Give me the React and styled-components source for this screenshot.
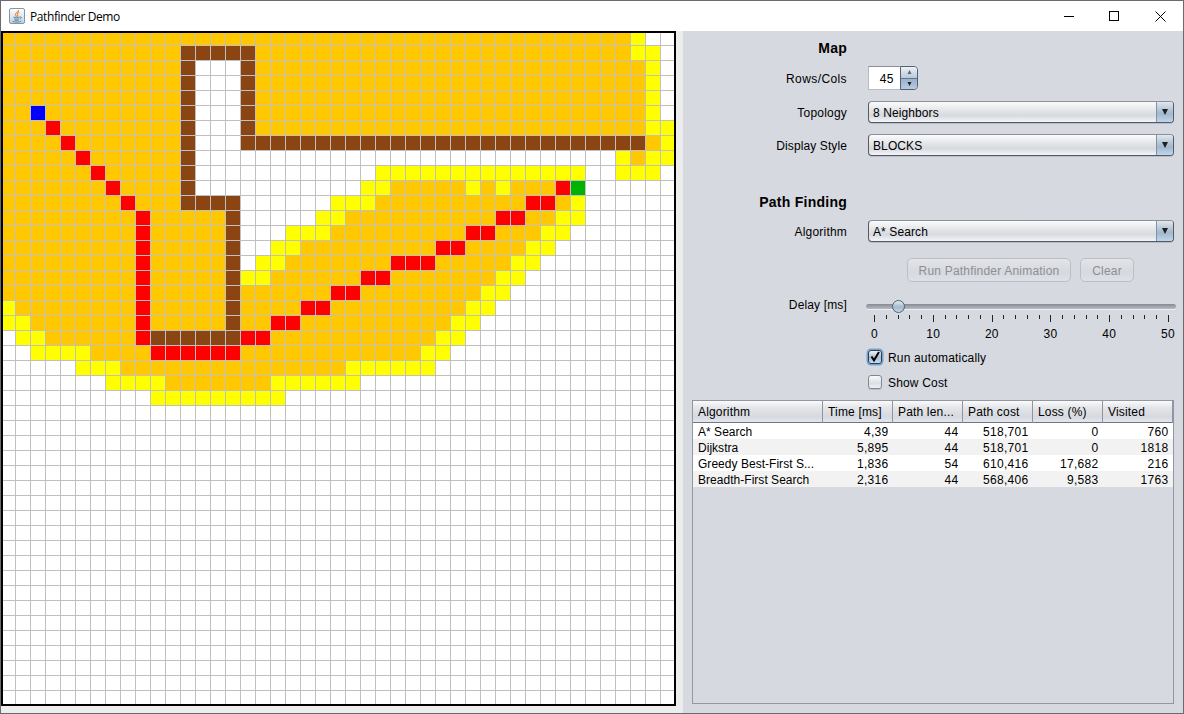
import React from "react";
import styled, { createGlobalStyle } from "styled-components";

const GlobalStyle = createGlobalStyle`
  * { box-sizing: border-box; }
  html, body { margin: 0; padding: 0; overflow: hidden; background: #6b6b6b; }
  body { font: 12px "Liberation Sans", Arial, sans-serif; color: #000; }
`;

const Window = styled.div`
  width: 1184px;
  height: 714px;
  border: 1px solid #6b6b6d;
  display: flex;
  flex-direction: column;
  background: #ededed;
`;

const TitleBar = styled.header`
  height: 30px;
  flex: none;
  background: #fff;
  display: flex;
  align-items: center;
  padding-left: 8px;
`;

const Title = styled.span`
  flex: 1;
  margin-left: 5px;
  font: 12px "Open Sans", "Noto Sans", sans-serif;
  letter-spacing: -0.4px;
`;

const WindowButton = styled.div`
  width: 46px;
  height: 30px;
  display: flex;
  align-items: center;
  justify-content: center;
`;

const Body = styled.div`
  flex: 1;
  display: flex;
  align-items: stretch;
`;

const Board = styled.div`
  position: relative;
  flex: none;
  width: 675px;
  height: 675px;
  display: grid;
  grid-template-columns: repeat(45, 15px);
  grid-auto-rows: 15px;
  background: #fff;
  &::after {
    content: "";
    position: absolute;
    inset: 0;
    border: 2px solid #000;
  }
`;

const Cell = styled.div`
  background: ${(p) => p.$color};
  border-right: 1px solid #c0c0c0;
  border-bottom: 1px solid #c0c0c0;
`;

const Panel = styled.aside`
  flex: 1;
  min-width: 0;
  margin-left: 7px;
  background: #d6d9df;
  display: flex;
  flex-direction: column;
  padding: 4px 6px 8px 9px;
`;

const Row = styled.div`
  display: grid;
  grid-template-columns: 155px 1fr;
  column-gap: 21px;
  align-items: center;
  height: ${(p) => p.$height}px;
  margin-top: ${(p) => p.$gap || 0}px;
`;

const Label = styled.span`
  text-align: right;
  white-space: nowrap;
  padding-top: ${(p) => p.$drop || 0}px;
  letter-spacing: ${(p) => p.$spacing ?? 0.15}px;
`;

const Heading = styled.h2`
  margin: 0;
  text-align: right;
  white-space: nowrap;
  font-size: 14px;
  font-weight: bold;
  letter-spacing: 0.25px;
`;

const Spinner = styled.div`
  display: flex;
  width: 50px;
  height: 24px;
`;

const SpinnerValue = styled.span`
  width: 32px;
  background: #fff;
  border: 1px solid #b9bcc2;
  border-top: 1px solid #8d9099;
  border-right: 0;
  line-height: 24px;
  text-align: right;
  padding-right: 6px;
  letter-spacing: 0.5px;
`;

const SpinnerButtons = styled.div`
  flex: 1;
  border: 1px solid #4f6377;
  border-radius: 0 4px 4px 0;
  display: flex;
  flex-direction: column;
  overflow: hidden;
`;

const SpinnerButton = styled.div`
  flex: 1;
  display: flex;
  align-items: center;
  justify-content: center;
  background: ${(p) =>
    p.$down ? "linear-gradient(#9db2c8, #b5cbe0)" : "linear-gradient(#eef2f6, #b9c8d7)"};
  border-bottom: ${(p) => (p.$down ? "0" : "1px solid #62778d")};
`;

const Combo = styled.div`
  width: 306px;
  height: 22px;
  display: flex;
  border: 1px solid #545964;
  border-top-color: #8d9099;
  border-radius: 4px;
  box-shadow: 0 1px 0 #b9bdc6;
  background: linear-gradient(#fbfbfc, #e4e6e9 40%, #d7dade 68%, #f3f5fa);
  overflow: hidden;
`;

const ComboText = styled.span`
  flex: 1;
  line-height: 22px;
  padding-left: 4px;
  letter-spacing: 0.1px;
`;

const ComboArrow = styled.span`
  width: 17px;
  display: flex;
  align-items: center;
  justify-content: center;
  border-left: 1px solid #7d93a8;
  background: linear-gradient(#e1e8ef, #afc1d2 45%, #a4b8cc 60%, #bfd6ec);
`;

const ButtonBar = styled.div`
  display: flex;
  gap: 9px;
  height: 24px;
  margin-top: 16px;
  padding-left: 215px;
`;

const PushButton = styled.button`
  width: ${(p) => p.$width}px;
  height: 24px;
  padding: 1px 0 0;
  border: 1px solid #bcbfc6;
  border-radius: 5px;
  background: linear-gradient(#e2e4e8, #d6d9de 60%, #dde0e6);
  color: #8e8f91;
  font: 12px "Liberation Sans", Arial, sans-serif;
  letter-spacing: 0.2px;
`;

const SliderRow = styled.div`
  display: flex;
  margin-top: 14px;
  height: 48px;
`;

const SliderLabel = styled(Label)`
  flex: none;
  width: 155px;
  line-height: 18px;
`;

const Slider = styled.div`
  flex: none;
  width: 312px;
  margin-left: 19px;
`;

const SliderLabels = styled.div`
  display: flex;
  justify-content: space-between;
  width: 323.5px;
  margin-left: -6.5px;
`;

const SliderValue = styled.span`
  width: 30px;
  text-align: center;
  line-height: 14px;
  letter-spacing: 0.3px;
`;

const CheckRow = styled.label`
  display: flex;
  align-items: center;
  height: 25px;
  padding-left: 176px;
  letter-spacing: 0.17px;
`;

const CheckText = styled.span`
  padding-top: 2px;
`;

const CheckBox = styled.span`
  width: 14px;
  height: 14px;
  margin-right: 6px;
  border: 1px solid ${(p) => (p.$checked ? "#2d3e50" : "#84878f")};
  border-radius: 3px;
  background: ${(p) =>
    p.$checked
      ? "linear-gradient(#edf2f7, #a9bdd0 55%, #c5dcf0)"
      : "linear-gradient(#fbfbfc, #dcdee2 60%, #f0f1f4)"};
  box-shadow: ${(p) => (p.$checked ? "0 0 0 1.5px #73a4d1" : "0 1px 0 #b9bdc6")};
`;

const TableFrame = styled.div`
  margin-top: 6px;
  width: 482px;
  height: 304px;
  border: 1px solid #9297a1;
`;

const TableRow = styled.div`
  display: grid;
  grid-template-columns: 130px repeat(5, 70px);
  height: 16px;
  line-height: 18px;
  background: ${(p) => (p.$shaded ? "#f2f2f2" : "#fff")};
`;

const TableHead = styled(TableRow)`
  height: 22px;
  line-height: 22px;
  background: linear-gradient(#fbfbfc, #e4e6e9 30%, #d6d9df 75%, #e3e6ec);
  border-bottom: 1px solid #70757f;
`;

const HeadCell = styled.span`
  padding-left: 5px;
  white-space: nowrap;
  border-right: 1px solid #8f949e;
  letter-spacing: 0.17px;
`;

const TableCell = styled.span`
  padding: 0 4.5px 0 5px;
  white-space: nowrap;
  text-align: ${(p) => (p.$numeric ? "right" : "left")};
  letter-spacing: ${(p) => (p.$numeric ? 0.3 : 0.03)}px;
`;

const COLORS = {
  W: "#ffffff",
  O: "#ffc800",
  Y: "#ffff00",
  B: "#8b4513",
  R: "#ff0000",
  S: "#0000ff",
  G: "#00b300",
};

/* Each row is run-length coded; whatever is left of a row stays free. */
const MAP = [
  "O42 Y1",
  "O12 B5 O25 Y2",
  "O12 B1 W3 B1 O26 Y1",
  "O12 B1 W3 B1 O26 Y1",
  "O12 B1 W3 B1 O26 Y1",
  "O2 S1 O9 B1 W3 B1 O26 Y1",
  "O3 R1 O8 B1 W3 B1 O26 Y2",
  "O4 R1 O7 B1 W3 B27 O1 Y1",
  "O5 R1 O6 B1 W28 Y1 O1 Y2",
  "O6 R1 O5 B1 W12 Y14 W2 Y3",
  "O7 R1 O4 B1 W11 Y2 O5 Y1 O1 Y1 O3 R1 G1",
  "O8 R1 O3 B4 W6 Y3 O10 R2 O1 Y1",
  "O9 R1 O5 B1 W5 Y2 O10 R2 O2 Y2",
  "O9 R1 O5 B1 W3 Y3 O9 R2 O3 Y2",
  "O9 R1 O5 B1 W2 Y2 O9 R2 O4 Y2",
  "O9 R1 O5 B1 W1 Y2 O7 R3 O5 Y2",
  "O9 R1 O5 B1 Y2 O6 R2 O7 Y2",
  "O9 R1 O5 B1 O6 R2 O8 Y2",
  "Y1 O8 R1 O5 B1 O4 R2 O9 Y2",
  "Y2 O7 R1 O5 B1 O2 R2 O10 Y2",
  "W1 Y2 O6 R1 B6 R2 O11 Y2",
  "W2 Y4 O4 R6 O12 Y2",
  "W5 Y3 O15 Y6",
  "W7 Y4 O7 Y6",
  "W10 Y9",
];

const cells = Array.from({ length: 45 }, (_, r) => {
  const line = (MAP[r] || "")
    .split(" ")
    .filter(Boolean)
    .map((run) => run[0].repeat(Number(run.slice(1))))
    .join("");
  return line.padEnd(45, "W").split("");
}).flat();

const HEADERS = ["Algorithm", "Time [ms]", "Path len...", "Path cost", "Loss (%)", "Visited"];
const RESULTS = [
  ["A* Search", "4,39", "44", "518,701", "0", "760"],
  ["Dijkstra", "5,895", "44", "518,701", "0", "1818"],
  ["Greedy Best-First S...", "1,836", "54", "610,416", "17,682", "216"],
  ["Breadth-First Search", "2,316", "44", "568,406", "9,583", "1763"],
];

const JavaIcon = () => (
  <svg width="16" height="16" viewBox="0 0 16 16" fill="none">
    <defs>
      <linearGradient id="jbg" x1="0" y1="0" x2="0" y2="1">
        <stop offset="0" stopColor="#ffffff" />
        <stop offset="1" stopColor="#c3d2de" />
      </linearGradient>
    </defs>
    <rect x="0.5" y="0.5" width="15" height="15" rx="1.5" fill="url(#jbg)" stroke="#7f97aa" />
    <path d="M9.6 2C10 4 6 4.8 6.4 6.6C6.6 7.5 7.4 7.8 7.5 8.6M10.4 4.5C8.5 5 8 6 8.6 6.8C9 7.4 8.8 8 8.2 8.6" stroke="#ed8b3c" strokeWidth="1.1" />
    <path d="M4.5 9.3H10.8M5 11H10.2M5.6 12.3H9.6M10.9 8.9C13 8.5 12.9 10.5 10.9 11M3.4 13.4C5.5 14.4 10.5 14.4 12.4 13.1" stroke="#54809f" strokeWidth="0.9" />
  </svg>
);

const Triangle = ({ w = 8, h = 7, up, color = "#1c1f24" }) => (
  <svg width={w} height={h} viewBox="0 0 8 7">
    <path d={up ? "M0.5 7L4 0L7.5 7Z" : "M0.5 0H7.5L4 7Z"} fill={color} />
  </svg>
);

const Select = ({ text }) => (
  <Combo>
    <ComboText>{text}</ComboText>
    <ComboArrow>
      <Triangle h={6} />
    </ComboArrow>
  </Combo>
);

const SliderTrack = () => (
  <svg width="312" height="31" viewBox="866 296 312 31" style={{ display: "block" }}>
    <defs>
      <linearGradient id="track" x1="0" y1="0" x2="0" y2="1">
        <stop offset="0" stopColor="#858a95" />
        <stop offset="1" stopColor="#b7bbc4" />
      </linearGradient>
      <linearGradient id="thumb" x1="0" y1="0" x2="0" y2="1">
        <stop offset="0" stopColor="#e9eff5" />
        <stop offset="0.55" stopColor="#a5b9cb" />
        <stop offset="1" stopColor="#c3dbef" />
      </linearGradient>
    </defs>
    <rect x="866" y="305" width="310" height="5" rx="2.5" fill="#eceef2" />
    <rect x="866" y="304" width="310" height="5" rx="2.5" fill="url(#track)" />
    {Array.from({ length: 26 }, (_, i) => (
      <rect
        key={i}
        x={Math.round(874 + i * 11.76)}
        y="315"
        width="1"
        height={i % 5 === 0 ? 7 : 4}
        fill="#22242a"
      />
    ))}
    <circle cx="898.5" cy="306.5" r="6" fill="url(#thumb)" stroke="#4d6174" />
  </svg>
);

export default function App() {
  return (
    <>
      <GlobalStyle />
      <Window>
        <TitleBar>
          <JavaIcon />
          <Title>Pathfinder Demo</Title>
          <WindowButton>
            <svg width="11" height="11" shapeRendering="crispEdges">
              <path d="M1 5.5H11" stroke="#000" />
            </svg>
          </WindowButton>
          <WindowButton>
            <svg width="11" height="11" shapeRendering="crispEdges">
              <rect x="0.5" y="0.5" width="9" height="9" fill="none" stroke="#000" />
            </svg>
          </WindowButton>
          <WindowButton>
            <svg width="11" height="11">
              <path d="M0.5 0.5L10.5 10.5M10.5 0.5L0.5 10.5" stroke="#000" />
            </svg>
          </WindowButton>
        </TitleBar>
        <Body>
          <Board>
            {cells.map((kind, i) => (
              <Cell key={i} $color={COLORS[kind]} />
            ))}
          </Board>
          <Panel>
            <Row $height={26}>
              <Heading>Map</Heading>
            </Row>
            <Row $height={24} $gap={5}>
              <Label $spacing={0.4} $drop={1}>Rows/Cols</Label>
              <Spinner>
                <SpinnerValue>45</SpinnerValue>
                <SpinnerButtons>
                  <SpinnerButton>
                    <Triangle up w={5} h={4} color="#62676e" />
                  </SpinnerButton>
                  <SpinnerButton $down>
                    <Triangle w={5} h={4} />
                  </SpinnerButton>
                </SpinnerButtons>
              </Spinner>
            </Row>
            <Row $height={22} $gap={11}>
              <Label $spacing={0.2} $drop={2}>Topology</Label>
              <Select text="8 Neighbors" />
            </Row>
            <Row $height={22} $gap={11}>
              <Label $spacing={0.1} $drop={2}>Display Style</Label>
              <Select text="BLOCKS" />
            </Row>
            <Row $height={22} $gap={35}>
              <Heading>Path Finding</Heading>
            </Row>
            <Row $height={22} $gap={7}>
              <Label $spacing={0.2} $drop={1}>Algorithm</Label>
              <Select text="A* Search" />
            </Row>
            <ButtonBar>
              <PushButton $width={164}>Run Pathfinder Animation</PushButton>
              <PushButton $width={54}>Clear</PushButton>
            </ButtonBar>
            <SliderRow>
              <SliderLabel>Delay [ms]</SliderLabel>
              <Slider>
                <SliderTrack />
                <SliderLabels>
                  {[0, 10, 20, 30, 40, 50].map((v) => (
                    <SliderValue key={v}>{v}</SliderValue>
                  ))}
                </SliderLabels>
              </Slider>
            </SliderRow>
            <CheckRow>
              <CheckBox $checked>
                <svg width="12" height="12" viewBox="0 0 12 12" style={{ display: "block" }}>
                  <path d="M2.5 5.5L5 9.3L10 1" fill="none" stroke="#000" strokeWidth="2" />
                </svg>
              </CheckBox>
              <CheckText>Run automatically</CheckText>
            </CheckRow>
            <CheckRow>
              <CheckBox />
              <CheckText>Show Cost</CheckText>
            </CheckRow>
            <TableFrame>
              <TableHead>
                {HEADERS.map((h) => (
                  <HeadCell key={h}>{h}</HeadCell>
                ))}
              </TableHead>
              {RESULTS.map((row, i) => (
                <TableRow key={row[0]} $shaded={i % 2 === 1}>
                  {row.map((value, c) => (
                    <TableCell key={c} $numeric={c > 0}>
                      {value}
                    </TableCell>
                  ))}
                </TableRow>
              ))}
            </TableFrame>
          </Panel>
        </Body>
      </Window>
    </>
  );
}
